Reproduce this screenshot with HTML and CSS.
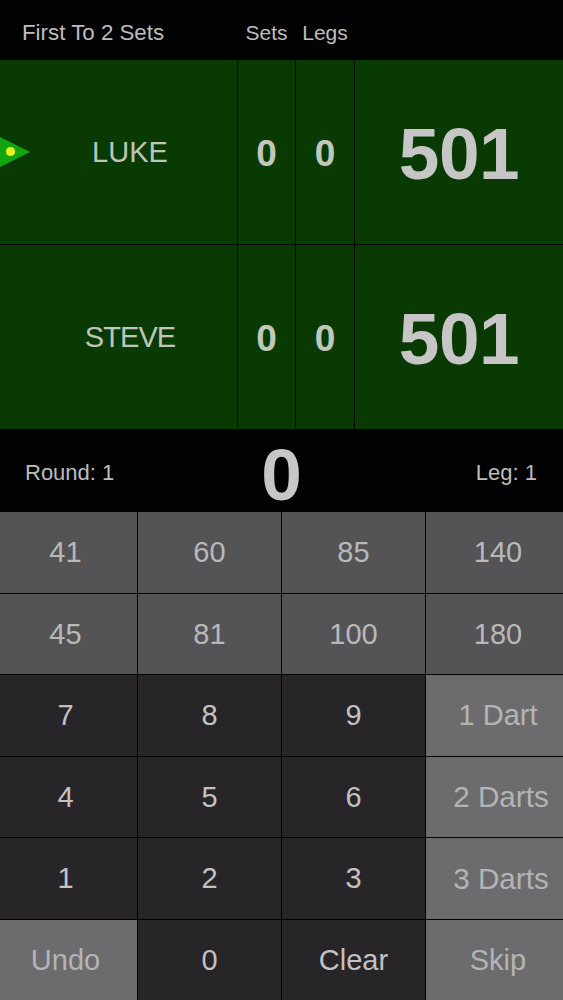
FILE: index.html
```html
<!DOCTYPE html>
<html lang="en">
<head>
<meta charset="utf-8">
<title>Darts Scorer</title>
<link rel="stylesheet" href="styles.css">
</head>
<body>
<div class="app">
  <header class="top">
    <div class="match">First To 2 Sets</div>
    <div class="col-label">Sets</div>
    <div class="col-label">Legs</div>
  </header>
  <section class="board">
    <div class="player">
      <svg class="turn" width="30" height="36" viewBox="0 0 30 36" aria-hidden="true">
        <polygon points="-6,0 30,18 -6,36" fill="#13a50f"/>
        <circle cx="10.5" cy="17.5" r="4.6" fill="#e9f21c"/>
      </svg>
      <div class="name">LUKE</div>
      <div class="count">0</div>
      <div class="count">0</div>
      <div class="score">501</div>
    </div>
    <div class="player">
      <div class="name tight">STEVE</div>
      <div class="count">0</div>
      <div class="count">0</div>
      <div class="score">501</div>
    </div>
  </section>
  <section class="status">
    <div class="round">Round: 1</div>
    <div class="current">0</div>
    <div class="leg">Leg: 1</div>
  </section>
  <section class="keypad">
    <div class="key mid">41</div><div class="key mid">60</div><div class="key mid">85</div><div class="key mid">140</div>
    <div class="key mid">45</div><div class="key mid">81</div><div class="key mid">100</div><div class="key mid">180</div>
    <div class="key dark">7</div><div class="key dark">8</div><div class="key dark">9</div><div class="key light">1 Dart</div>
    <div class="key dark">4</div><div class="key dark">5</div><div class="key dark">6</div><div class="key light wide">2 Darts</div>
    <div class="key dark">1</div><div class="key dark">2</div><div class="key dark">3</div><div class="key light wide">3 Darts</div>
    <div class="key light">Undo</div><div class="key dark">0</div><div class="key dark">Clear</div><div class="key light">Skip</div>
  </section>
</div>
</body>
</html>
```

FILE: styles.css
```css
* { box-sizing: border-box; }
html, body { margin: 0; padding: 0; background: #000; }
body { font-family: "Liberation Sans", Arial, sans-serif; color: #bdbdbd; }
.app { width: 563px; height: 1000px; display: flex; flex-direction: column; overflow: hidden; background: #020203; }

.top { height: 60px; display: grid; grid-template-columns: 237px 57px 58px; column-gap: 1px; align-items: center; padding-top: 6px; }
.match { padding-left: 22px; font-size: 22.3px; }
.col-label { text-align: center; font-size: 21px; }

.board { height: 369px; display: grid; grid-template-rows: 184px 184px; row-gap: 1px; background: #010801; }
.player { position: relative; display: grid; grid-template-columns: 237px 57px 58px 1fr; column-gap: 1px; }
.player > div { background: #0a3a04; display: flex; align-items: center; justify-content: center; }
.turn { position: absolute; left: 0; top: 74px; z-index: 1; }
.name { font-size: 29px; padding-left: 23px; color: #bcc6b9; }
.tight { letter-spacing: -0.9px; }
.count { font-size: 37px; font-weight: 700; color: #c0c8bc; padding-top: 3px; }
.score { font-size: 73px; font-weight: 700; color: #c6c6c6; letter-spacing: -0.5px; padding-top: 2px; }

.status { height: 83px; display: grid; grid-template-columns: 1fr auto 1fr; align-items: center; }
.round { padding-left: 25px; font-size: 22px; }
.leg { padding-right: 26px; font-size: 22px; text-align: right; }
.current { font-size: 73px; font-weight: 700; color: #c6c6c6; padding-top: 4px; }

.keypad { height: 488px; display: grid; grid-template-columns: 137px 143px 143px 137px; grid-template-rows: repeat(6, 1fr); gap: 1px; }
.key { display: flex; align-items: center; justify-content: center; font-size: 29px; padding-top: 1px; }
.key:nth-child(4n+1) { padding-right: 6px; }
.key:nth-child(4n) { padding-left: 7px; }
.key.wide { padding-left: 13px; font-size: 29.6px; }
.mid { background: #545356; color: #b9b9b9; }
.dark { background: #272528; color: #c2c2c2; }
.light { background: #6c6b6e; color: #b4b4b4; }
```
